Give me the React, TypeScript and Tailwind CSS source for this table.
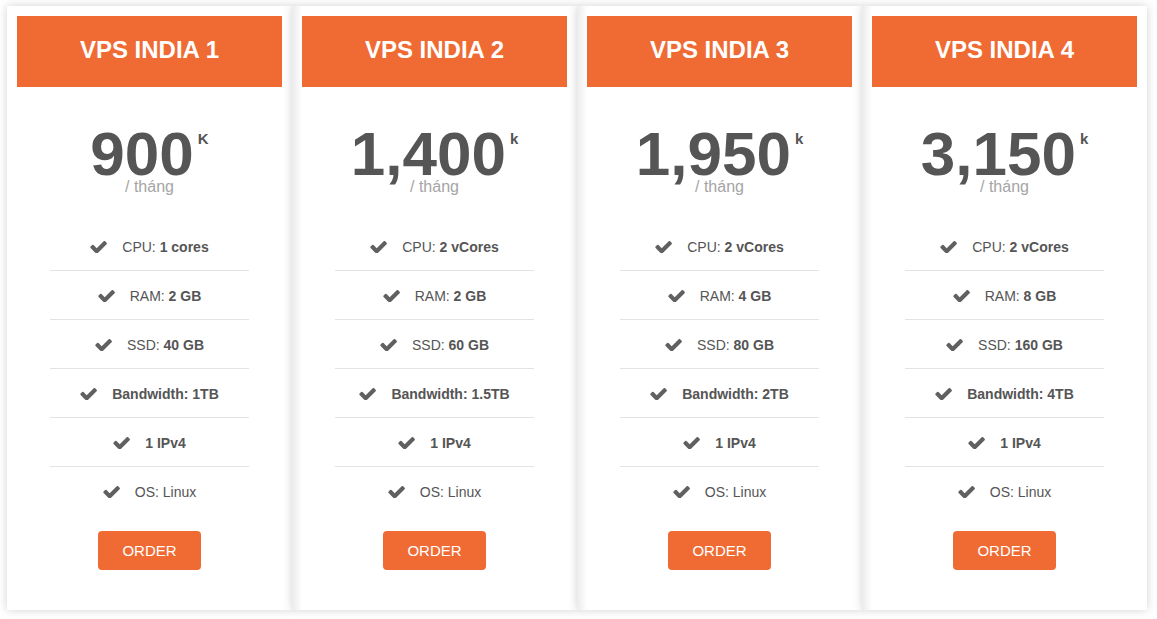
const plans = [
  {
    name: "VPS INDIA 1",
    price: "900",
    unit: "K",
    cpu: "1 cores",
    ram: "2 GB",
    ssd: "40 GB",
    bw: "1TB",
  },
  {
    name: "VPS INDIA 2",
    price: "1,400",
    unit: "k",
    cpu: "2 vCores",
    ram: "2 GB",
    ssd: "60 GB",
    bw: "1.5TB",
  },
  {
    name: "VPS INDIA 3",
    price: "1,950",
    unit: "k",
    cpu: "2 vCores",
    ram: "4 GB",
    ssd: "80 GB",
    bw: "2TB",
  },
  {
    name: "VPS INDIA 4",
    price: "3,150",
    unit: "k",
    cpu: "2 vCores",
    ram: "8 GB",
    ssd: "160 GB",
    bw: "4TB",
  },
];

function Check() {
  return (
    <svg width="17" height="12" viewBox="90 360 1590 1080" className="shrink-0 fill-[#606060]">
      <path d="M1671 566q0 40-28 68l-724 724-136 136q-28 28-68 28t-68-28l-136-136-362-362q-28-28-28-68t28-68l136-136q28-28 68-28t68 28l294 295 656-657q28-28 68-28t68 28l136 136q28 28 28 68z" />
    </svg>
  );
}

function Row({ children, last }: { children: React.ReactNode; last?: boolean }) {
  return (
    <div
      className={`box-content h-[46px] pt-[2px] flex items-center justify-center gap-[15px] text-[14px] leading-[18px] text-[#555] ${
        last ? "" : "border-b border-[#e3e3e3]"
      }`}
    >
      <Check />
      <span>{children}</span>
    </div>
  );
}

export default function App() {
  return (
    <main className="min-h-screen bg-white pt-[6px] pl-[7px] font-['Liberation_Sans',Arial,sans-serif]">
      <div className="flex w-[1140px]">
        {plans.map((p, i) => (
          <div
            key={p.name}
            className={`relative w-[285px] h-[604px] bg-white px-[10px] pt-[10px] shadow-[0_0_9px_rgba(0,0,0,0.18)] ${
              i > 0 ? "before:absolute before:inset-y-0 before:left-0 before:w-[10px] before:bg-gradient-to-r before:from-[rgba(0,0,0,0.08)] before:to-transparent" : ""
            }`}
          >
            {/* header */}
            <div className="relative h-[71px] bg-[#f06b34] pt-[22px] text-center text-white text-[24px] leading-[24px] font-bold">
              {p.name}
            </div>

            {/* price */}
            <div className="mt-[44px] flex justify-center items-start text-[#555]">
              <span className="text-[62px] leading-[46px] font-bold">{p.price}</span>
              <span className="ml-[4px] text-[15px] leading-[15px] font-bold">{p.unit}</span>
            </div>
            <div className="mt-[2px] text-center text-[16px] leading-[16px] text-[#a5a5a5]">/ tháng</div>

            {/* features */}
            <div className="mt-[27px] mx-auto w-[199px]">
              <Row>
                CPU: <b>{p.cpu}</b>
              </Row>
              <Row>
                RAM: <b>{p.ram}</b>
              </Row>
              <Row>
                SSD: <b>{p.ssd}</b>
              </Row>
              <Row>
                <b>Bandwidth: {p.bw}</b>
              </Row>
              <Row>
                <b>1 IPv4</b>
              </Row>
              <Row last>OS: Linux</Row>
            </div>

            <div className="mt-[16px] flex justify-center">
              <button className="w-[103px] h-[39px] rounded-[4px] bg-[#f06b34] text-white text-[15px] leading-[15px]">
                ORDER
              </button>
            </div>
          </div>
        ))}
      </div>
    </main>
  );
}
